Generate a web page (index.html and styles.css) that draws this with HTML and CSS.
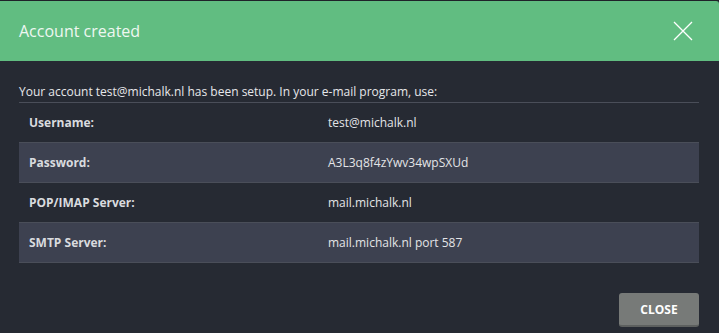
FILE: index.html
```html
<!DOCTYPE html>
<html>
<head>
<meta charset="utf-8">
<link rel="stylesheet" href="styles.css">
</head>
<body>
<div class="modal">
  <div class="modal-header">
    <h1 class="modal-title">Account created</h1>
    <button class="close-x" aria-label="Close">
      <svg width="20" height="20" viewBox="0 0 20 20"><path d="M1 1 L19 19 M19 1 L1 19" stroke="#ffffff" stroke-width="1.3" fill="none"/></svg>
    </button>
  </div>
  <div class="modal-body">
    <p class="intro">Your account test@michalk.nl has been setup. In your e-mail program, use:</p>
    <table class="info">
      <tr><th>Username:</th><td>test@michalk.nl</td></tr>
      <tr class="alt"><th>Password:</th><td>A3L3q8f4zYwv34wpSXUd</td></tr>
      <tr><th>POP/IMAP Server:</th><td>mail.michalk.nl</td></tr>
      <tr class="alt"><th>SMTP Server:</th><td>mail.michalk.nl port 587</td></tr>
    </table>
    <div class="footer">
      <button class="btn-close">CLOSE</button>
    </div>
  </div>
</div>
</body>
</html>
```
FILE: styles.css
```css
html, body {
  margin: 0;
  padding: 0;
  background: #262a33;
  font-family: "Open Sans", "DejaVu Sans", sans-serif;
}
.modal {
  width: 719px;
  height: 333px;
  border-top: 1px solid #1f2229;
  box-sizing: border-box;
  background: #262a33;
  overflow: hidden;
}
.modal-header {
  background: #61bd81;
  height: 60px;
  display: flex;
  align-items: center;
  justify-content: space-between;
  padding: 0 26px 0 19px;
  border-top-right-radius: 3px;
  border-top-left-radius: 0;
}
.modal-title {
  margin: 0;
  font-size: 16px;
  font-weight: 400;
  color: #eef7f1;
  padding-bottom: 1px;
}
.close-x {
  background: none;
  border: 0;
  padding: 0;
  width: 20px;
  height: 20px;
  display: block;
  margin-top: 0;
}
.close-x svg { display: block; }
.modal-body {
  padding: 21px 20px 0 19px;
}
.intro {
  margin: 0;
  font-size: 12px;
  color: #e6e7ea;
  line-height: 20px;
  padding-bottom: 0;
}
.info {
  width: 680px;
  border-collapse: collapse;
  border-top: 1px solid #4a4e59;
  font-size: 12px;
}
.info tr {
  height: 40px;
  border-bottom: 1px solid #4a4e59;
}
.info tr.alt { background: #3d4150; }
.info th {
  text-align: left;
  font-weight: 700;
  color: #d9dbdf;
  width: 289px;
  padding: 0 0 0 10px;
}
.info td {
  color: #e3e4e7;
  padding: 0 0 0 10px;
}
.footer {
  display: flex;
  justify-content: flex-end;
  margin-top: 30px;
}
.btn-close {
  width: 80px;
  height: 34px;
  background: #777a78;
  border: 0;
  border-bottom: 2px solid #5d605f;
  border-radius: 3px;
  color: #ffffff;
  font-family: "Open Sans", "DejaVu Sans", sans-serif;
  font-weight: 700;
  font-size: 12px;
  padding: 0;
}
```
